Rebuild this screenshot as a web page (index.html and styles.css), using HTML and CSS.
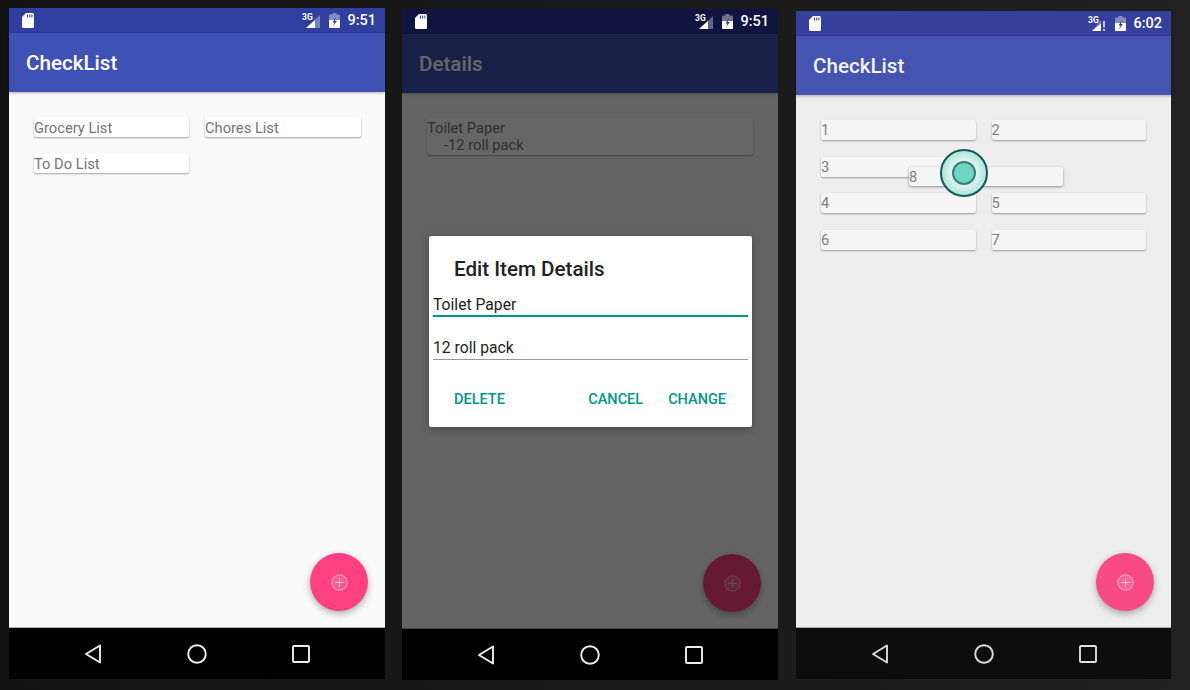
FILE: index.html
```html
<!DOCTYPE html>
<html lang="en">

<head>
    <meta charset="UTF-8">
    <title>CheckList</title>
    <link rel="stylesheet" href="styles.css">
</head>

<body>

    <svg class="defs" xmlns="http://www.w3.org/2000/svg">
        <symbol id="sd" viewBox="0 0 12 15">
            <path d="M4 0H10.500Q12 0 12 1.500V13.500Q12 15 10.500 15H1.500Q0 15 0 13.500V4Z" fill="#fff"/>
            <path d="M5.500 1.500V4.500M7.700 1.500V4.500M9.900 1.500V4.500" stroke="#3a4aa5" stroke-width="1.100"/>
        </symbol>
        <symbol id="signal" viewBox="0 0 19 16">
            <path d="M18 2V15H4Z" fill="#fff" fill-opacity=".35"/>
            <path d="M13 7V15H4Z" fill="#fff"/>
            <text x="0" y="7" class="net">3G</text>
        </symbol>
        <symbol id="signal-off" viewBox="0 0 19 16">
            <path d="M13 4V15H4Z" fill="#fff" fill-opacity=".35"/>
            <path d="M13 7.500V15H4Z" fill="#fff"/>
            <path d="M16 5V11.500M16 13V15" stroke="#fff" stroke-width="1.400"/>
            <text x="0" y="7" class="net">3G</text>
        </symbol>
        <symbol id="battery" viewBox="0 0 11 15">
            <path d="M3.500 0H7.500V1.500H10Q11 1.500 11 2.500V14Q11 15 10 15H1Q0 15 0 14V2.500Q0 1.500 1 1.500H3.500Z" fill="#fff" fill-opacity=".4"/>
            <path d="M0 7H11V14Q11 15 10 15H1Q0 15 0 14Z" fill="#fff"/>
            <path d="M7 4L3.500 9.500H5.500L4 13.500L7.800 8H5.800Z" fill="#2f3d9c"/>
        </symbol>
        <symbol id="back" viewBox="0 0 18 20">
            <path d="M16 1.500V18.500L2 10Z" fill="none" stroke="currentColor" stroke-width="1.900" stroke-linejoin="round"/>
        </symbol>
        <symbol id="home" viewBox="0 0 20 20">
            <circle cx="10" cy="10" r="8.800" fill="none" stroke="currentColor" stroke-width="1.900"/>
        </symbol>
        <symbol id="recent" viewBox="0 0 20 20">
            <rect x="2" y="2" width="16" height="16" rx="1" fill="none" stroke="currentColor" stroke-width="1.900"/>
        </symbol>
        <symbol id="add" viewBox="0 0 18 18">
            <circle cx="9" cy="9" r="8.200" fill="#fff" fill-opacity=".15" stroke="currentColor" stroke-width=".8"/>
            <path d="M9 4.500V13.500M4.500 9H13.500" stroke="currentColor" stroke-width=".9"/>
        </symbol>
    </svg>

    <!-- first phone: the lists -->
    <div class="phone phone-one">
        <div class="status">
            <svg class="ico-sd"><use href="#sd"/></svg>
            <div class="status-right">
                <svg class="ico-signal"><use href="#signal"/></svg>
                <svg class="ico-battery"><use href="#battery"/></svg>
                <span class="time">9:51</span>
            </div>
        </div>
        <div class="appbar">CheckList</div>
        <div class="content">
            <div class="cards">
                <div class="card">Grocery List</div>
                <div class="card">Chores List</div>
                <div class="card">To Do List</div>
            </div>
            <div class="fab"><svg class="ico-add"><use href="#add"/></svg></div>
        </div>
        <div class="nav">
            <svg class="ico-nav"><use href="#back"/></svg>
            <svg class="ico-nav"><use href="#home"/></svg>
            <svg class="ico-nav"><use href="#recent"/></svg>
        </div>
    </div>

    <!-- second phone: edit dialog -->
    <div class="phone phone-two">
        <div class="status">
            <svg class="ico-sd"><use href="#sd"/></svg>
            <div class="status-right">
                <svg class="ico-signal"><use href="#signal"/></svg>
                <svg class="ico-battery"><use href="#battery"/></svg>
                <span class="time">9:51</span>
            </div>
        </div>
        <div class="dimmed">
            <div class="appbar">Details</div>
            <div class="content">
                <div class="cards">
                    <div class="card card-wide">
                        Toilet Paper
                        <div class="sub">-12 roll pack</div>
                    </div>
                </div>
                <div class="fab"><svg class="ico-add"><use href="#add"/></svg></div>
            </div>
            <div class="scrim">
                <div class="dialog">
                    <div class="dialog-title">Edit Item Details</div>
                    <div class="field field-on">Toilet Paper</div>
                    <div class="field">12 roll pack</div>
                    <div class="actions">
                        <span class="action action-left">DELETE</span>
                        <span class="action">CANCEL</span>
                        <span class="action">CHANGE</span>
                    </div>
                </div>
            </div>
        </div>
        <div class="nav">
            <svg class="ico-nav"><use href="#back"/></svg>
            <svg class="ico-nav"><use href="#home"/></svg>
            <svg class="ico-nav"><use href="#recent"/></svg>
        </div>
    </div>

    <!-- third phone: dragging a card -->
    <div class="phone phone-three">
        <div class="status">
            <svg class="ico-sd"><use href="#sd"/></svg>
            <div class="status-right">
                <svg class="ico-signal"><use href="#signal-off"/></svg>
                <svg class="ico-battery"><use href="#battery"/></svg>
                <span class="time">6:02</span>
            </div>
        </div>
        <div class="appbar">CheckList</div>
        <div class="content">
            <div class="cards">
                <div class="card">1</div>
                <div class="card">2</div>
                <div class="card">3</div>
                <div class="empty"></div>
                <div class="card">4</div>
                <div class="card">5</div>
                <div class="card">6</div>
                <div class="card">7</div>
            </div>
            <div class="card dragged">8</div>
            <div class="touch"><div class="touch-dot"></div></div>
            <div class="fab"><svg class="ico-add"><use href="#add"/></svg></div>
        </div>
        <div class="nav">
            <svg class="ico-nav"><use href="#back"/></svg>
            <svg class="ico-nav"><use href="#home"/></svg>
            <svg class="ico-nav"><use href="#recent"/></svg>
        </div>
    </div>

</body>

</html>
```

FILE: styles.css
```css
html, body {
    margin: 0;
    height: 100%;
    overflow: hidden;
}

body {
    display: flex;
    align-items: flex-start;
    padding-left: 9px;
    height: 690px;
    box-sizing: border-box;
    background: linear-gradient(to right, #121212 0, #171717 390px, #1b1b1b 790px, #212121 1190px);
    font-family: Roboto, "Liberation Sans", sans-serif;
}

.defs {
    display: none;
}

.net {
    font-size: 8.500px;
    font-weight: 700;
    fill: #fff;
    font-family: Roboto, sans-serif;
}

.phone {
    display: flex;
    flex-direction: column;
    flex: none;
    width: 376px;
    height: 671px;
    margin-top: 8px;
    margin-right: 17px;
}

.phone-two {
    margin-top: 9px;
    margin-right: 18px;
}

.phone-three {
    width: 375px;
    height: 668px;
    margin-top: 11px;
    margin-right: 0;
}

/* status bar */
.status {
    display: flex;
    align-items: center;
    justify-content: space-between;
    flex: none;
    height: 25px;
    padding: 0 9px 0 13px;
    background: #303f9f;
    box-sizing: border-box;
}

.phone-two .status {
    background: #0f1440;
}

.phone-three .status {
    background: #353f9c;
}

.status-right {
    display: flex;
    align-items: center;
}

.ico-sd {
    width: 12px;
    height: 15px;
}

.ico-signal {
    width: 19px;
    height: 16px;
}

.ico-battery {
    width: 11px;
    height: 15px;
    margin-left: 8px;
}

.time {
    margin-left: 7px;
    color: #fff;
    font-size: 14.500px;
    font-weight: 500;
}

/* app bar */
.appbar {
    flex: none;
    height: 59px;
    line-height: 60px;
    padding-left: 17px;
    background: #3f51b5;
    color: #fff;
    font-size: 20.600px;
    font-weight: 500;
    position: relative;
    z-index: 1;
    box-shadow: 0 1px 3px rgba(0, 0, 0, .3);
}

.phone-three .appbar {
    background: #4454b0;
    color: #f3f3f8;
}

/* main area */
.dimmed {
    display: flex;
    flex-direction: column;
    flex: 1;
    min-height: 0;
    position: relative;
}

.content {
    flex: 1;
    position: relative;
    background: #fafafa;
    border-bottom: 1px solid #aaa;
}

.phone-three .content {
    background: #eee;
}

.cards {
    display: grid;
    grid-template-columns: 155px 156px;
    grid-auto-rows: 20px;
    gap: 16px;
    padding: 25px 0 0 25px;
}

.card {
    background: #fff;
    border-radius: 2px;
    box-shadow: 0 1px 2px rgba(0, 0, 0, .35);
    color: #757575;
    font-size: 14.700px;
    line-height: 22px;
    white-space: nowrap;
}

.phone-three .card {
    background: #f5f5f5;
    color: #808080;
    line-height: 20px;
}

.phone-three .cards {
    grid-template-columns: 154.500px 154.500px;
    gap: 16.500px 16px;
}

.card-wide {
    grid-column: 1 / 3;
    grid-row: span 2;
    width: 326px;
    height: 37px;
    line-height: 17px;
    padding-top: 2px;
    box-sizing: border-box;
}

.sub {
    padding-left: 17px;
}

.phone-two .cards {
    grid-auto-rows: 10.500px;
}

.dragged {
    position: absolute;
    left: 113px;
    top: 72px;
    width: 154px;
    height: 19px;
    z-index: 2;
    box-shadow: 0 1px 3px rgba(0, 0, 0, .4);
}

.touch {
    position: absolute;
    left: 144px;
    top: 54px;
    width: 48px;
    height: 48px;
    display: flex;
    align-items: center;
    justify-content: center;
    box-sizing: border-box;
    border: 2px solid #0f5a52;
    border-radius: 50%;
    background: radial-gradient(circle, #dff3ef 0, #d8f2ec 45%, #7fd8c8 100%);
    z-index: 3;
}

.touch-dot {
    width: 24px;
    height: 24px;
    box-sizing: border-box;
    border: 2px solid #3a7f76;
    border-radius: 50%;
    background: #6fd6c4;
}

.fab {
    position: absolute;
    right: 17px;
    bottom: 16px;
    width: 58px;
    height: 58px;
    display: flex;
    align-items: center;
    justify-content: center;
    border-radius: 50%;
    background: #ff4081;
    box-shadow: 0 3px 7px rgba(0, 0, 0, .3);
    color: #f6d5e2;
}

.phone-three .fab {
    background: #f94a85;
}

.ico-add {
    width: 17px;
    height: 17px;
}

/* dialog */
.scrim {
    position: absolute;
    left: 0;
    right: 0;
    top: 0;
    bottom: 0;
    z-index: 5;
    display: flex;
    align-items: flex-start;
    justify-content: center;
    background: rgba(0, 0, 0, .6);
}

.dialog {
    width: 323px;
    height: 191px;
    margin-top: 202px;
    margin-left: 1px;
    box-sizing: border-box;
    background: #fff;
    border-radius: 2px;
    padding: 0 4px;
    box-shadow: 0 2px 8px rgba(0, 0, 0, .3);
}

.dialog-title {
    padding: 21px 0 0 21px;
    font-size: 20.600px;
    line-height: 24px;
    font-weight: 500;
    color: #212121;
}

.field {
    height: 30px;
    margin-top: 13px;
    line-height: 36px;
    font-size: 15.700px;
    color: #212121;
    border-bottom: 1px solid #999;
    box-sizing: border-box;
}

.field-on {
    height: 27px;
    margin-top: 9px;
    line-height: 30px;
    border-bottom: 2px solid #009688;
}

.actions {
    display: flex;
    gap: 25px;
    padding: 30px 22px 0 21px;
}

.action {
    color: #009688;
    font-size: 14.500px;
    line-height: 20px;
    font-weight: 500;
}

.action-left {
    margin-right: auto;
}

/* nav bar */
.nav {
    display: flex;
    align-items: center;
    justify-content: center;
    gap: 84px;
    flex: none;
    height: 51px;
    background: #000;
    color: #eee;
}

.phone-three .nav {
    background: #0d0d0d;
    color: #ddd;
}

.ico-nav {
    width: 20px;
    height: 20px;
}
```
